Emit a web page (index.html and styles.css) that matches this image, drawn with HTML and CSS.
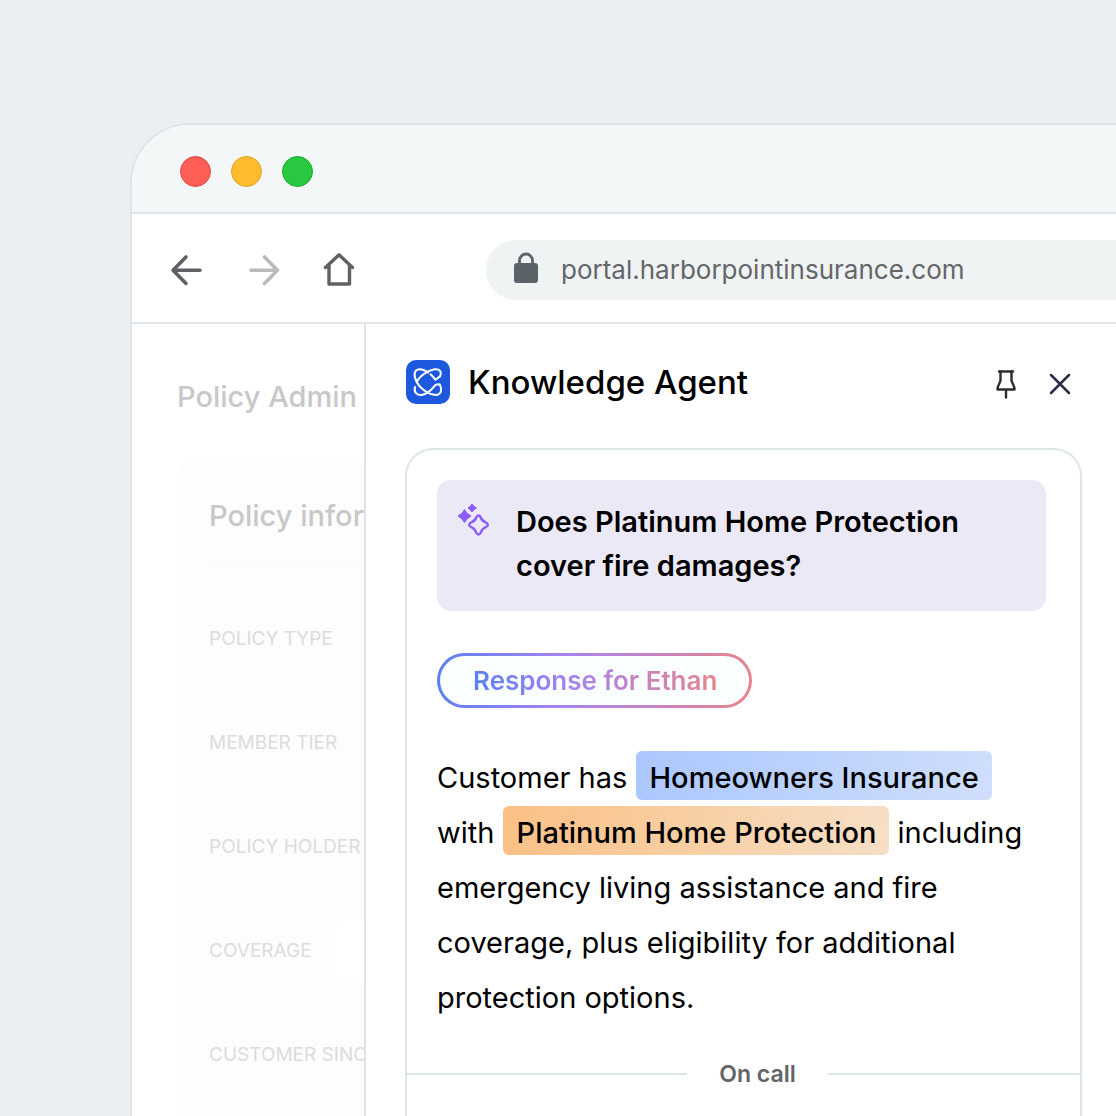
FILE: index.html
```html
<!DOCTYPE html>
<html lang="en">
<head>
<meta charset="utf-8">
<meta name="viewport" content="width=device-width, initial-scale=1">
<title>Knowledge Agent</title>
<link rel="stylesheet" href="styles.css">
</head>
<body>
<div class="browser">
  <header class="titlebar">
    <span class="light light-red"></span>
    <span class="light light-yellow"></span>
    <span class="light light-green"></span>
  </header>

  <nav class="toolbar" aria-label="Browser">
    <div class="toolbar-buttons">
      <button class="icon-button" type="button" aria-label="Back">
        <svg width="34" height="34" viewBox="0 0 34 34" fill="none" stroke="#5f6164" stroke-width="3.600" stroke-linecap="round" stroke-linejoin="round"><path d="M16 4L3 17.300L16 30.500M3.500 17.300H30"/></svg>
      </button>
      <button class="icon-button" type="button" aria-label="Forward" disabled>
        <svg width="34" height="34" viewBox="0 0 34 34" fill="none" stroke="#b9babb" stroke-width="3.600" stroke-linecap="round" stroke-linejoin="round"><path d="M18.500 4L31.500 17.300L18.500 30.500M31 17.300H5"/></svg>
      </button>
      <button class="icon-button" type="button" aria-label="Home">
        <svg width="34" height="34" viewBox="0 0 34 34" fill="none" stroke="#5f6164" stroke-width="3.400" stroke-linecap="round" stroke-linejoin="round"><path d="M3.500 14.500L17 1.800L30.500 14.500M7 12.500V31H27.500V12.500"/></svg>
      </button>
    </div>
    <label class="address">
      <svg width="26" height="32" viewBox="0 0 26 32" fill="none"><path d="M6.500 12V8.500a6.500 6.500 0 0 1 13 0v3.500" stroke="#5c6368" stroke-width="2.800"/><rect x="1" y="11" width="24" height="20" rx="3" fill="#5c6368"/></svg>
      <input class="address-input" type="text" aria-label="Address" value="portal.harborpointinsurance.com">
    </label>
  </nav>

  <div class="workspace">
    <aside class="policy">
      <h1 class="policy-title">Policy Admin</h1>
      <section class="policy-card">
        <h2 class="policy-heading">Policy information</h2>
        <dl class="fields">
          <div class="field"><dt>POLICY TYPE</dt></div>
          <div class="field"><dt>MEMBER TIER</dt></div>
          <div class="field"><dt>POLICY HOLDER</dt></div>
          <div class="field"><dt>COVERAGE</dt><dd class="field-value"></dd></div>
          <div class="field"><dt>CUSTOMER SINCE</dt></div>
        </dl>
      </section>
    </aside>

    <main class="agent">
      <header class="agent-header">
        <svg class="agent-logo" width="46" height="46" viewBox="0 0 46 46" fill="none"><rect x="1" y="1" width="44" height="44" rx="10" fill="#1c59dd"/><g stroke="#fff" stroke-width="2" stroke-linecap="round" stroke-linejoin="round"><path d="M34.700 17.800C37.500 12.500 34.500 9.500 29.500 10.300C22.500 11.500 14 17.500 11.800 23.200C14.500 28.500 22.500 35 29.500 35.800C35.500 36.500 37.800 32 34.700 25.300L30.500 25.800C26.500 31 21.500 35.300 16.500 35.900C11 36.300 8.800 33 10 28"/><path d="M34.500 17.800L30.500 20.800C29 18.800 27.500 17 25.500 15.300"/><path d="M11.800 23C8.500 17 8.500 10.700 14.500 10.300C17.800 10.200 20.500 11.800 23 13.400"/></g></svg>
        <h2 class="agent-title">Knowledge Agent</h2>
        <div class="agent-actions">
          <button class="icon-button" type="button" aria-label="Pin">
            <svg width="22" height="30" viewBox="0 0 22 30" fill="none" stroke="#2b2c30" stroke-width="2.400"><path d="M4 2.500H18" stroke-linecap="round"/><path d="M5.500 2.500V11.500C5 14.500 2.500 16 2.500 20.500H19.500C19.500 16 17 14.500 16.500 11.500V2.500M11 20.500V28.500" stroke-linejoin="round" stroke-linecap="round"/></svg>
          </button>
          <button class="icon-button" type="button" aria-label="Close">
            <svg width="22" height="22" viewBox="0 0 22 22" fill="none" stroke="#2b2f45" stroke-width="2.500" stroke-linecap="round"><path d="M2 2L20 20M20 2L2 20"/></svg>
          </button>
        </div>
      </header>

      <section class="card">
        <div class="question">
          <svg width="34" height="34" viewBox="0 0 34 34"><path d="M15 1Q16.500 3.500 19.500 5Q16.500 6.500 15 9Q13.500 6.500 11 5Q13.500 3.500 15 1Z" fill="#8b5cf6" stroke="#8b5cf6" stroke-linejoin="round"/><path d="M7.500 7Q9.500 11.300 13.500 13Q9.500 15 7.500 19Q5.500 15 1.500 13Q5.500 11.300 7.500 7Z" fill="#8b5cf6" stroke="#8b5cf6" stroke-width="1.400" stroke-linejoin="round"/><path d="M19.500 14C20.500 12 22.500 12 23.500 14C24.500 17 26 18.300 29 19.500C31.500 20.800 31.500 23 29 24C26 25.200 24.500 27 23.500 30C22.500 32 20.500 32 19.500 30C18.500 27 17 25.200 14 24C11.500 23 11.500 20.800 14 19.500C17 18.300 18.500 17 19.500 14Z" fill="none" stroke="#8b5cf6" stroke-width="2.400"/></svg>
          <h3 class="question-text">Does Platinum Home Protection cover fire damages?</h3>
        </div>

        <div class="badge"><span class="badge-text">Response for Ethan</span></div>

        <p class="answer">Customer has <mark class="tag tag-blue">Homeowners Insurance</mark> with <mark class="tag tag-orange">Platinum Home Protection</mark> including emergency living assistance and fire coverage, plus eligibility for additional protection options.</p>

        <div class="divider">On call</div>
      </section>
    </main>
  </div>
</div>
</body>
</html>
```
FILE: styles.css
```css
* {
  box-sizing: border-box;
}

body {
  margin: 0;
  height: 100vh;
  overflow: hidden;
  display: flex;
  padding: 123px 0 0 130px;
  background: #eaeff4;
  color: #000;
  font-family: Inter, "Liberation Sans", sans-serif;
}

h1, h2, h3, p, dl, dd {
  margin: 0;
}

.browser {
  flex: 1;
  min-width: 0;
  display: flex;
  flex-direction: column;
  overflow: hidden;
  border: 2px solid #dee4ea;
  border-width: 2px 0 0 2px;
  border-radius: 60px 0 0 0;
  background: #fff;
}

.titlebar {
  flex: none;
  display: flex;
  gap: 20px;
  padding: 31px 48px 25px;
  border-bottom: 2px solid #dee4e8;
  background: #f3f7f8;
}

.light {
  width: 31px;
  height: 31px;
  border: 1px solid;
  border-radius: 50%;
}

.light-red {
  border-color: #e0443e;
  background: #ff5f57;
}

.light-yellow {
  border-color: #dea123;
  background: #febc2e;
}

.light-green {
  border-color: #1aab29;
  background: #28c840;
}

.toolbar {
  flex: none;
  display: flex;
  align-items: center;
  gap: 130px;
  padding: 26px 0 22px 38px;
  border-bottom: 2px solid #e3e6e8;
}

.toolbar-buttons {
  display: flex;
  gap: 42px;
}

.icon-button {
  display: flex;
  padding: 0;
  border: 0;
  background: none;
}

.address {
  flex: 1;
  min-width: 0;
  display: flex;
  align-items: center;
  gap: 22px;
  height: 60px;
  padding: 0 27px;
  border-radius: 30px 0 0 30px;
  background: #eff3f4;
}

.address svg {
  flex: none;
  margin-bottom: 4px;
}

.address-input {
  flex: 1;
  min-width: 0;
  padding: 0;
  border: 0;
  background: none;
  color: #646668;
  font: 400 26px/32px Inter, "Liberation Sans", sans-serif;
}

.workspace {
  flex: 1;
  min-height: 0;
  display: flex;
}

.policy {
  flex: none;
  width: 234px;
  overflow: hidden;
  padding: 53px 0 0 45px;
  border-right: 2px solid #dfe3e8;
  color: #c8c8c8;
  white-space: nowrap;
}

.policy-title {
  font-size: 29px;
  font-weight: 500;
  line-height: 40px;
}

.policy-card {
  height: 100%;
  margin-top: 45px;
  padding: 34px 0 0 32px;
  border-radius: 12px 0 0 0;
  background: #fdfdfd;
}

.policy-heading {
  padding-bottom: 26px;
  border-bottom: 2px solid #fafafa;
  font-size: 29px;
  font-weight: 500;
  line-height: 40px;
}

.fields {
  display: grid;
  gap: 40px;
  padding-top: 42px;
  color: #dcdcdc;
  font-size: 19px;
}

.field {
  display: flex;
  align-items: center;
  gap: 24px;
  height: 64px;
}

.field-value {
  flex: 1;
  height: 64px;
  border-radius: 10px 0 0 10px;
  background: #fff;
}

.agent {
  flex: 1;
  min-width: 0;
  display: flex;
  flex-direction: column;
  padding: 35px 34px 0 39px;
}

.agent-header {
  display: flex;
  align-items: center;
  gap: 17px;
}

.agent-title {
  font-size: 33px;
  font-weight: 500;
  line-height: 46px;
}

.agent-actions {
  display: flex;
  align-items: center;
  gap: 32px;
  margin-left: auto;
  padding: 4px 11px 0 0;
}

.card {
  flex: 1;
  margin-top: 43px;
  padding: 30px 34px 0 30px;
  border: 2px solid #dee5e8;
  border-bottom: 0;
  border-radius: 28px 28px 0 0;
}

.question {
  display: flex;
  gap: 25px;
  padding: 20px;
  border-radius: 14px;
  background: #ece9f7;
}

.question svg {
  flex: none;
  margin-top: 3px;
}

.question-text {
  padding-bottom: 3px;
  font-size: 29px;
  font-weight: 600;
  line-height: 44px;
}

.badge {
  width: fit-content;
  margin-top: 42px;
  padding: 8px 32px 8px 33px;
  border: 3px solid transparent;
  border-radius: 28px;
  background:
    linear-gradient(#fafeff, #fafeff) padding-box,
    linear-gradient(90deg, #5d7ff0, #a584f0 40%, #e8848c) border-box;
}

.badge-text {
  display: block;
  background: linear-gradient(90deg, #5d7ff0, #a584f0 40%, #e8848c);
  background-clip: text;
  color: transparent;
  font-size: 26px;
  font-weight: 600;
  line-height: 33px;
}

.answer {
  margin-top: 42px;
  font-size: 29px;
  line-height: 55px;
}

.tag {
  padding: 9px 13px 5px 14px;
  border-radius: 6px;
  color: #000;
  font-weight: 500;
}

.tag-blue {
  background: linear-gradient(100deg, #abc7fd, #cfdefb);
}

.tag-orange {
  background: linear-gradient(100deg, #fac084, #f6dfc6);
}

.divider {
  display: flex;
  align-items: center;
  gap: 32px;
  margin: 33px -34px 0 -30px;
  color: #626466;
  font-size: 23px;
  font-weight: 600;
  line-height: 32px;
}

.divider::before,
.divider::after {
  content: "";
  flex: 10;
  height: 2px;
  background: #dee5e8;
}

.divider::after {
  flex: 9;
}
```
